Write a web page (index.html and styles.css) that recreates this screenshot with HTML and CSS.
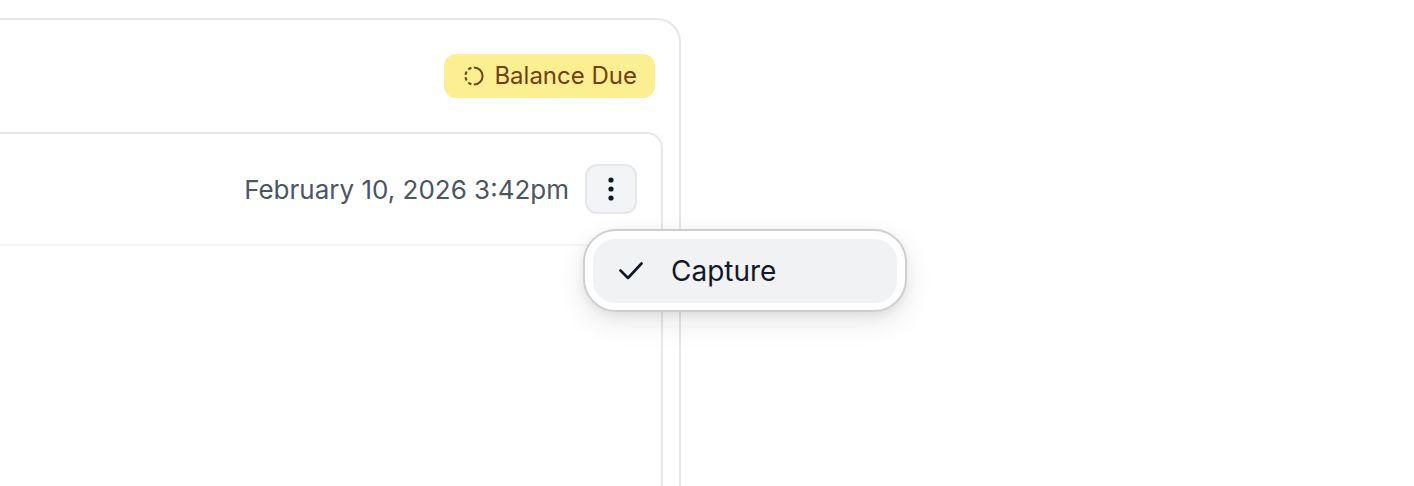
FILE: index.html
```html
<!DOCTYPE html>
<html lang="en">
<head>
  <meta charset="UTF-8" />
  <title>Payment</title>
  <link rel="stylesheet" href="styles.css">
</head>
<body>
  <div class="page">
    <section class="card">
      <header class="card-head">
        <span class="badge">
          <svg class="badge-icon" viewBox="0 0 20 20" fill="none" stroke="currentColor" stroke-width="2">
            <circle cx="10" cy="10" r="8.6" transform="rotate(-90 10 10)" stroke-dasharray="27 2.5 3.5 2.5 3.5 2.5 3.5 2.5 3.5 2.5" />
          </svg>
          Balance Due
        </span>
      </header>
      <div class="panel">
        <div class="panel-row">
          <span class="date">February 10, 2026 3:42pm</span>
          <button class="more-btn" type="button" aria-label="More">
            <svg viewBox="0 0 24 24" fill="currentColor" width="24" height="24">
              <circle cx="12" cy="3" r="2.6" />
              <circle cx="12" cy="12" r="2.6" />
              <circle cx="12" cy="21" r="2.6" />
            </svg>
          </button>
          <div class="menu">
            <div class="menu-item">
              <svg class="check" viewBox="0 0 24 24" fill="none" stroke="currentColor" stroke-width="2.6" stroke-linecap="round" stroke-linejoin="round">
                <path d="M1.5 11.5 9 19 22.5 4.5" />
              </svg>
              Capture
            </div>
          </div>
        </div>
      </div>
    </section>
  </div>
</body>
</html>
```

FILE: styles.css
```css
:root {
  --border: #e5e7eb;
  --text: #111827;
  --muted: #4b5563;
}
html, body {
  margin: 0;
  height: 100%;
  overflow: hidden;
  background: #fff;
}
body {
  font-family: Inter, "Liberation Sans", sans-serif;
  color: var(--text);
}
.page {
  width: 681px;
  padding-top: 18px;
  display: flex;
  justify-content: flex-end;
}
.card {
  flex: none;
  width: 800px;
  height: 700px;
  box-sizing: border-box;
  border: 2px solid var(--border);
  border-radius: 24px;
  padding: 0 16px 0 0;
}
.card-head {
  display: flex;
  justify-content: flex-end;
  height: 112px;
  padding: 34px 8px 0 0;
  box-sizing: border-box;
}
.badge {
  display: flex;
  align-items: center;
  gap: 10px;
  height: 44px;
  padding: 0 18px 0 20px;
  border-radius: 12px;
  background: #fcef91;
  color: #713f12;
  font-size: 24px;
  line-height: 44px;
}
.badge-icon {
  width: 20px;
  height: 20px;
}
.panel {
  height: 600px;
  border: 2px solid var(--border);
  border-radius: 16px;
}
.panel-row {
  position: relative;
  display: flex;
  justify-content: flex-end;
  align-items: center;
  gap: 16px;
  height: 110px;
  padding-right: 24px;
  border-bottom: 2px solid #f3f4f6;
}
.date {
  font-size: 26px;
  color: var(--muted);
}
.more-btn {
  display: flex;
  align-items: center;
  justify-content: center;
  width: 52px;
  height: 50px;
  padding: 0;
  border: 2px solid var(--border);
  border-radius: 12px;
  background: #f3f4f6;
  color: var(--text);
}
.menu {
  position: absolute;
  top: 95px;
  right: -246px;
  width: 324px;
  height: 83px;
  box-sizing: border-box;
  padding: 8px;
  background: #fff;
  border: 2px solid #cfcfcf;
  border-radius: 33px;
  box-shadow: 0 10px 28px rgba(0, 0, 0, 0.1), 0 3px 10px rgba(0, 0, 0, 0.06);
}
.menu-item {
  display: flex;
  align-items: center;
  gap: 28px;
  height: 64px;
  padding-left: 26px;
  border-radius: 22px;
  background: #f1f2f4;
  font-size: 28px;
}
.check {
  width: 24px;
  height: 24px;
}
```
